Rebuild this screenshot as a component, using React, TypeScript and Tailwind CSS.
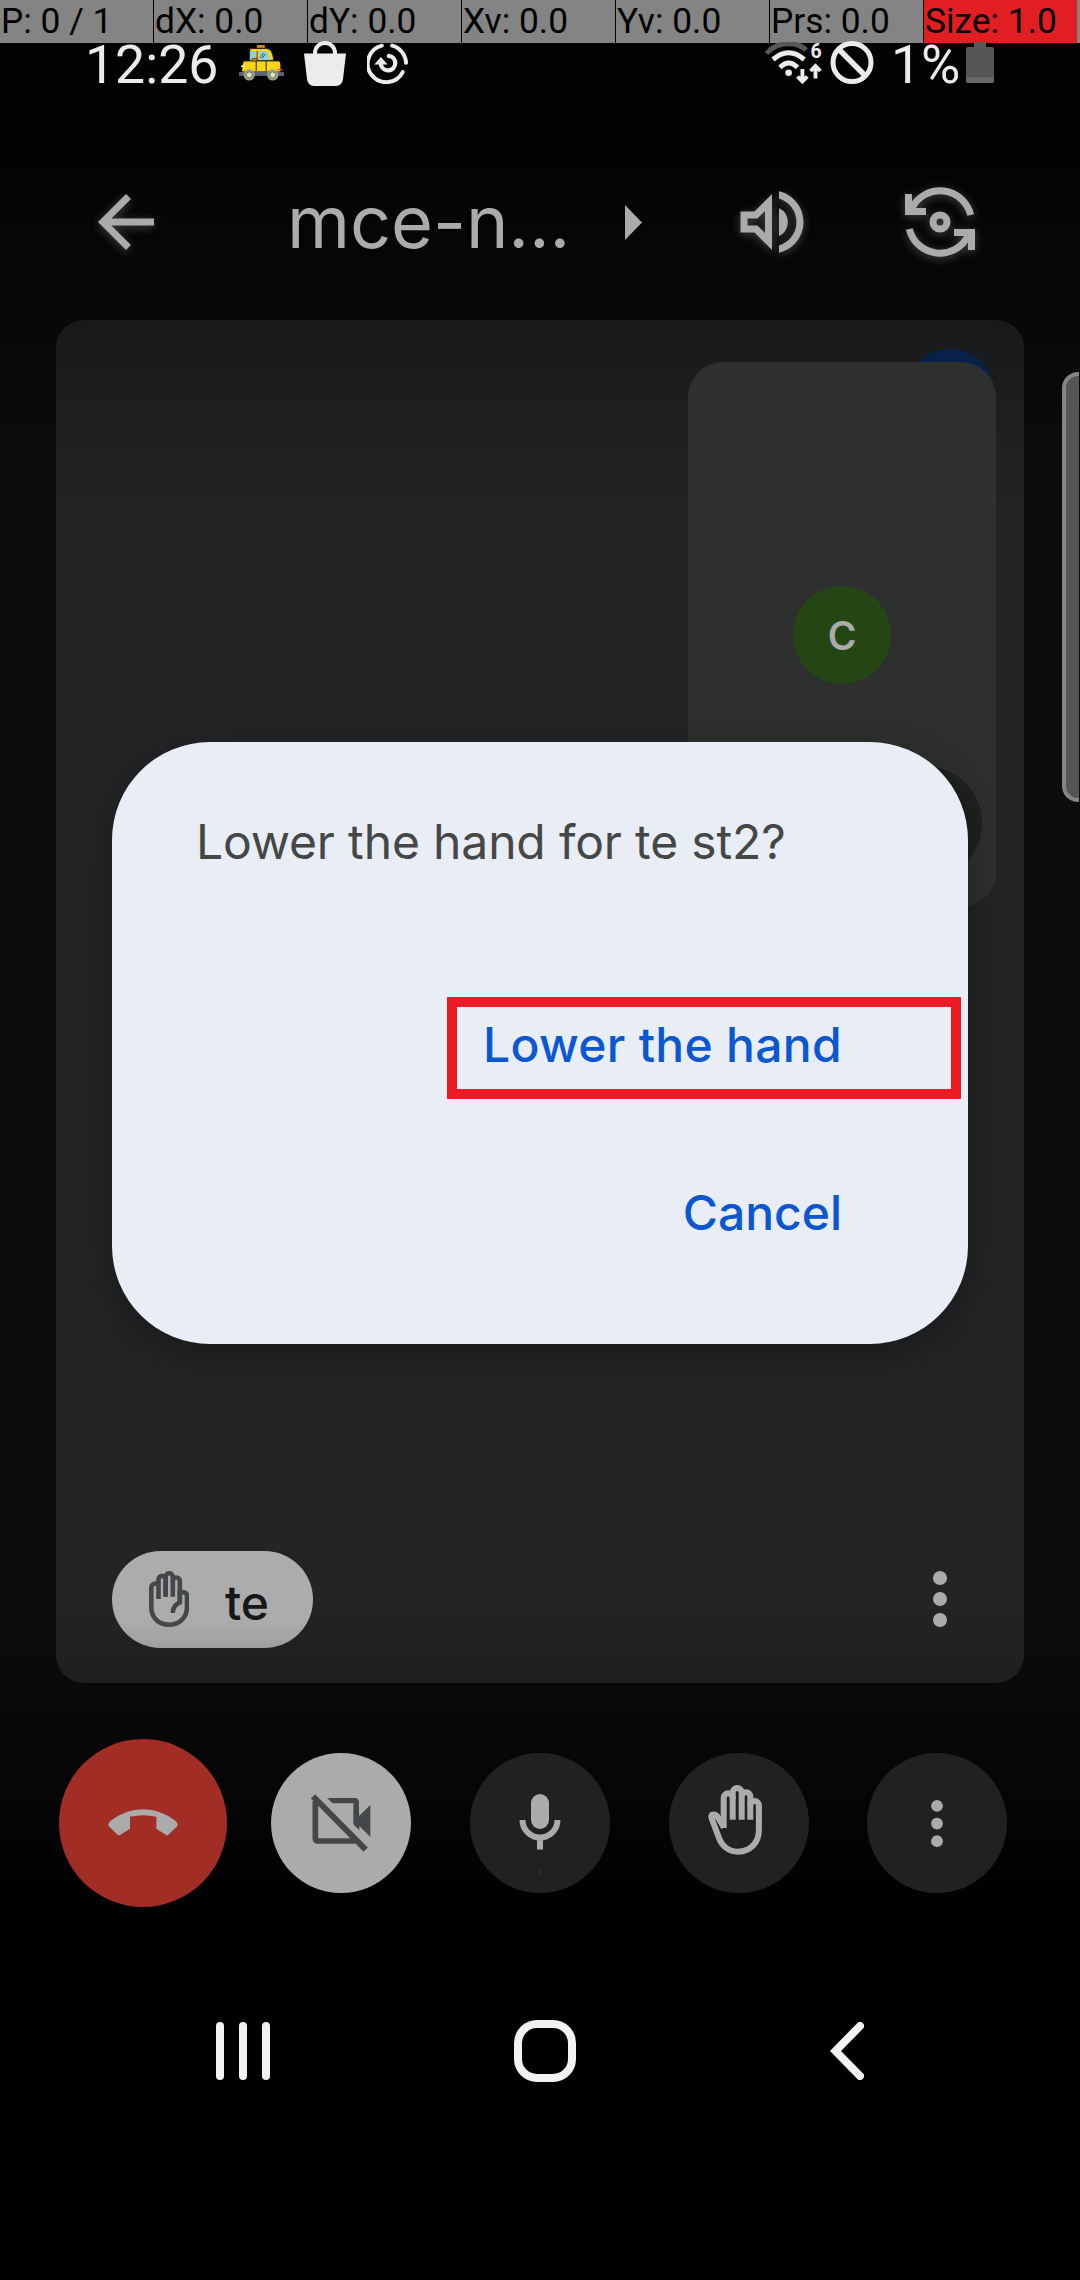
import React from "react";

const metrics = ["P: 0 / 1", "dX: 0.0", "dY: 0.0", "Xv: 0.0", "Yv: 0.0", "Prs: 0.0"];

function PointerBar() {
  return (
    <div className="flex h-[43px] gap-px bg-black font-[Roboto] text-[35.3px] leading-[43px] text-black">
      {metrics.map((m) => (
        <div key={m} className="w-[153px] shrink-0 whitespace-nowrap bg-[#848484] pl-[1px]">
          {m}
        </div>
      ))}
      <div className="w-[153px] shrink-0 whitespace-nowrap bg-[#e11f22] pl-[1px]">Size: 1.0</div>
      <div className="-ml-px grow bg-[#848484]" />
    </div>
  );
}

function Taxi() {
  return (
    <svg viewBox="0 0 136 108" className="ml-[19px] mt-[5px] h-[36px] w-[45px] shrink-0">
      <rect x="54" y="0" width="24" height="8" fill="#e8921c" />
      <path d="M33 10H84Q102 12 105 46H33Z" fill="#fbd414" stroke="#2a2408" strokeWidth="3" />
      <path d="M33 18H51V46H33Z" fill="#8fd0e0" />
      <path d="M60 18H80Q92 26 94 46H60Z" fill="#8fd0e0" />
      <path d="M64 38L74 24M70 40L80 26" stroke="#24323a" strokeWidth="2.5" />
      <path d="M55 17V46" stroke="#b56a18" strokeWidth="5" />
      <rect x="0" y="81" width="136" height="12" fill="#5c6670" />
      <path d="M15 48H118Q125 50 125 60V80H10V62Z" fill="#fbd414" />
      <path d="M15 48H118" stroke="#2a2408" strokeWidth="2.5" />
      <path d="M52 46V78M82 46V78" stroke="#2a2408" strokeWidth="3" />
      <path d="M38 46Q38 38 48 40H55V48H40Z" fill="#c98b12" stroke="#2a2408" strokeWidth="2" />
      <path d="M6 64H20" stroke="#fff5b0" strokeWidth="4" />
      <path d="M117 74H132" stroke="#e0436a" strokeWidth="4" />
      <circle cx="31" cy="90" r="17" fill="#9a9f94" />
      <circle cx="31" cy="90" r="9" fill="#e6e2b8" stroke="#4a4a40" strokeWidth="2" />
      <circle cx="102" cy="90" r="17" fill="#9a9f94" />
      <circle cx="102" cy="90" r="9" fill="#e6e2b8" stroke="#4a4a40" strokeWidth="2" />
    </svg>
  );
}

function StatusBar() {
  return (
    <div className="relative -mt-[3px] flex h-[48px] items-start pl-[85px] font-[Roboto] text-[53.6px] leading-[50px] text-[#ececec]">
      <span className="w-[135px] shrink-0 whitespace-nowrap">12:26</span>
      <Taxi />
      <svg viewBox="0 0 42 45" className="ml-[20px] mt-[1px] h-[45px] w-[42px] shrink-0">
        <path d="M11 14V12a10 10 0 0 1 20 0v2" fill="none" stroke="#ececec" strokeWidth="4" />
        <path d="M0 12.500H42L39 38Q38 45 32 45H10Q4 45 3 38Z" fill="#ececec" />
      </svg>
      <svg viewBox="0 0 124 124" className="ml-[21px] mt-[3px] h-[41px] w-[41px] shrink-0" fill="none" stroke="#ececec" strokeWidth="12" strokeLinecap="round">
        <path d="M45 8A56 56 0 1 0 108 88" />
        <path d="M76 8A56 56 0 0 1 118 60" />
        <path d="M66 39A22 22 0 1 1 42 66" strokeWidth="13" />
        <path d="M33 60L42 50L51 60Z" strokeWidth="10" fill="#ececec" />
      </svg>
      <svg viewBox="0 0 60 44" className="ml-[356px] mt-[2px] h-[44px] w-[60px] shrink-0" fill="none" stroke="#ececec" strokeWidth="5">
        <path d="M2.500 11.500C8 5 16 1.700 24.600 1.700C32 1.700 38 4 42 8" stroke="#585858" />
        <path d="M9 17.500Q24.600 4 40.300 17.500" />
        <path d="M16 25.500Q24.600 16.500 33.500 25.500" />
        <circle cx="24.600" cy="30.700" r="3.300" fill="#ececec" stroke="none" />
        <path d="M38.400 27V39M33.500 34.500L38.400 39.500L43.300 34.500M51.500 36.500V25M46.600 29L51.500 24L56.400 29" strokeWidth="3.900" />
        <text x="46.500" y="16" fill="#ececec" stroke="none" fontFamily="Roboto" fontWeight="700" fontSize="19.500">6</text>
      </svg>
      <svg viewBox="0 0 44 44" className="ml-[6px] mt-px h-[44px] w-[44px] shrink-0" fill="none" stroke="#ececec" strokeWidth="5">
        <circle cx="22" cy="21.500" r="19" />
        <path d="M8.500 8L35.500 35" strokeWidth="5.500" />
      </svg>
      <span className="ml-[17px] w-[70px] shrink-0 whitespace-nowrap">1%</span>
      <svg viewBox="0 0 28 41" className="ml-[5px] mt-[2px] h-[41px] w-[28px] shrink-0">
        <path d="M8 0h12v6h-12z" fill="#585858" />
        <rect y="5" width="28" height="36" rx="2" fill="#555555" />
        <path d="M0 35h28v4q0 2-2 2h-24q-2 0-2-2z" fill="#666666" />
      </svg>
    </div>
  );
}

const glow = "[filter:drop-shadow(0_2px_5px_rgba(150,160,170,0.4))]";

function Header() {
  return (
    <div className="mt-[92px] flex h-[84px] items-center pl-[84px] text-[#ababab]">
      <svg viewBox="0 0 24 24" className={"h-[84px] w-[84px] shrink-0 " + glow} fill="currentColor">
        <path d="M20 11H7.830l5.590-5.590L12 4l-8 8 8 8 1.410-1.410L7.830 13H20v-2z" />
      </svg>
      <div className="ml-[119px] w-[300px] whitespace-nowrap font-[Inter] text-[72px] leading-[84px] tracking-[-0.1px]">mce-n...</div>
      <svg viewBox="0 0 17 35" className="ml-[38px] h-[35px] w-[17px] shrink-0" fill="currentColor">
        <path d="M0 0L17 17.500L0 35Z" />
      </svg>
      <svg viewBox="0 0 24 24" className={"ml-[87.500px] h-[84px] w-[84px] shrink-0 " + glow} fill="currentColor">
        <path d="M3 9v6h4l5 5V4L7 9H3zm7-.170v6.340L7.830 13H5v-2h2.830L10 8.830z" />
        <path d="M16.500 12A4.500 4.500 0 0 0 14 7.970v8.050c1.480-.730 2.500-2.250 2.500-4.020z" />
        <path d="M14 3.230v2.060c2.890.860 5 3.540 5 6.710s-2.110 5.850-5 6.710v2.060c4.010-.910 7-4.490 7-8.770s-2.990-7.860-7-8.770z" />
      </svg>
      <svg viewBox="0 0 24 24" className={"ml-[84.500px] h-[84px] w-[84px] shrink-0 " + glow} fill="none" stroke="currentColor" strokeWidth="2">
        <circle cx="12" cy="12" r="2" />
        <path d="M20.770 10A9 9 0 0 0 4 8M3 4V9H8" />
        <path d="M3.230 14A9 9 0 0 0 20 16M21 20V15H16" />
      </svg>
    </div>
  );
}

function SelfView() {
  return (
    <div className="relative ml-auto mr-[28px] mt-[42px] h-[545px] w-[308px]">
      <div className="absolute left-[219px] top-[-13px] h-[87px] w-[87px] rounded-full bg-[#08204a]" />
      <div className="relative flex h-full flex-col items-center rounded-[35px] bg-[#2e302f] pt-[224px]">
        <div className="h-[98px] w-[98px] rounded-full bg-[#244615] text-center font-[Inter] text-[39px] font-semibold leading-[99px] text-[#ababab]">C</div>
        <div className="absolute bottom-[27px] right-[14px] h-[114px] w-[114px] rounded-full bg-[#1f2120]" />
      </div>
    </div>
  );
}

function Dots({ className }: { className: string }) {
  return (
    <svg viewBox="0 0 14 56" className={className} fill="#ababab">
      <circle cx="7" cy="7" r="7" />
      <circle cx="7" cy="28" r="7" />
      <circle cx="7" cy="49" r="7" />
    </svg>
  );
}

function VideoTile() {
  return (
    <div className="mx-[56px] mt-[56px] flex h-[1363px] flex-col rounded-[28px] bg-[linear-gradient(to_bottom,#18191a_0px,#232426_200px,#232426_1280px,#1d1e1f_1363px)]">
      <SelfView />
      <div className="mb-[35px] mt-auto flex items-center justify-between pl-[56px] pr-[77px]">
        <div className="flex h-[97px] w-[201px] items-center rounded-full bg-[linear-gradient(to_bottom,#acacac_0,#acacac_70%,#9f9f9f_100%)] pl-[37px]">
          <svg viewBox="0 0 40 56" className="mb-px h-[56px] w-[40px] shrink-0" fill="none" stroke="#44474a" strokeWidth="4.600">
            <path d="M9.500 28V8.500a3.600 3.600 0 0 1 7.200 0V25.700" />
            <path d="M16.700 25.700V5.800a3.550 3.550 0 0 1 7.100 0V25.700" />
            <path d="M23.800 10a3.500 3.500 0 0 1 7 0V31.500Q23.800 34.500 23.800 42" />
            <path d="M9.500 13.500C6 11.500 2.300 13 2.300 17V36C2.300 46 9 53.700 20 53.700S38 46 38 36V25C38 21.500 35 20.500 30.800 21.500V32" />
          </svg>
          <span className="ml-[36px] pt-[6px] font-[Inter] text-[48px] font-medium leading-[60px] text-[#161719]">te</span>
        </div>
        <Dots className="mb-px h-[56px] w-[14px]" />
      </div>
    </div>
  );
}

function Controls() {
  return (
    <div className="mt-[56px] flex h-[168px] items-center pl-[59px]">
      <div className="flex h-[168px] w-[168px] items-center justify-center rounded-full bg-[#a12d25]">
        <svg viewBox="0 0 210 80" className="mb-[2px] h-[27px] w-[70px]" fill="#ababab">
          <path d="M8 35Q52 0 105 0T202 35Q214 45 206 53L181 77Q177 80 173 77L145 59V23Q105 13 66 23V59L37 77Q33 80 29 77L4 53Q-4 45 8 35Z" />
        </svg>
      </div>
      <div className="ml-[44px] flex h-[140px] w-[140px] items-center justify-center rounded-full bg-[#ababab]">
        <svg viewBox="812 828 180 174" className="h-[58px] w-[60px]">
          <path d="M818 835L976 995" stroke="#44474a" strokeWidth="18" fill="none" />
          <path d="M825 850V960Q825 969 834 969H945" stroke="#44474a" strokeWidth="17" fill="none" />
          <path d="M860 840H942Q956 840 956 854V894L990 861V957L957 924V937L939 919V856H877Z" fill="#44474a" />
        </svg>
      </div>
      <div className="ml-[59px] flex h-[140px] w-[140px] flex-col items-center rounded-full bg-[#212123] pt-[41px]">
        <svg viewBox="0 0 42 56" className="h-[56px] w-[42px]" fill="none" stroke="#ababab" strokeWidth="6">
          <rect x="12" y="0" width="18" height="35" rx="9" fill="#ababab" stroke="none" />
          <path d="M3.500 26a17.500 17.500 0 0 0 35 0M21 43V55.500" />
        </svg>
        <div className="mt-[21px] h-[2px] w-px bg-[#ff0000]" />
      </div>
      <div className="ml-[59px] flex h-[140px] w-[140px] justify-center rounded-full bg-[#212123] pr-[8px] pt-[31px]">
        <svg viewBox="0 0 56 72" className="h-[72px] w-[56px]" fill="none" stroke="#ababab" strokeWidth="6">
          <path d="M25.700 35.700V13.800a4.500 4.500 0 0 0-9 0V44" />
          <path d="M25.700 15V8.500a4.500 4.500 0 0 1 9 0V35.700" />
          <path d="M34.700 12.500a4.300 4.300 0 0 1 8.600 0V35.700" />
          <path d="M43.300 21.400a4.300 4.300 0 0 1 8.600 0V46C51.900 59 43 67.700 31 67.700C21 67.700 14.500 61 12 54L4.500 34C3 29 9 30 11 33.500L17 43.500" />
        </svg>
      </div>
      <div className="ml-[58px] flex h-[140px] w-[140px] items-center justify-center rounded-full bg-[#212123]">
        <Dots className="h-[47px] w-[12px]" />
      </div>
    </div>
  );
}

function SystemNav() {
  return (
    <div className="mt-[113px] flex h-[62px] items-center pl-[216px]">
      <div className="flex h-[58px] w-[54px] justify-between">
        <div className="w-[8px] rounded-full bg-[#f2f2f2]" />
        <div className="w-[8px] rounded-full bg-[#f2f2f2]" />
        <div className="w-[8px] rounded-full bg-[#f2f2f2]" />
      </div>
      <div className="ml-[244px] h-[62px] w-[62px] rounded-[23px] border-8 border-[#f2f2f2]" />
      <svg viewBox="0 0 34 58" className="ml-[254px] h-[58px] w-[34px]" fill="none" stroke="#f2f2f2" strokeWidth="8" strokeLinecap="round">
        <path d="M30 4L5.500 29L30 54" />
      </svg>
    </div>
  );
}

function LowerHandDialog() {
  return (
    <div className="absolute left-[112px] top-[742px] flex h-[602px] w-[856px] flex-col rounded-[98px] bg-[#e8edf6] pt-[68px] font-[Inter] text-[48px] leading-[64px] shadow-[0_10px_36px_rgba(0,0,0,0.3)]">
      <div className="whitespace-nowrap pl-[84px] tracking-[-0.15px] text-[#444746]">Lower the hand for te st2?</div>
      <button className="mr-[126px] mt-[139px] self-end whitespace-nowrap font-medium tracking-[0.3px] text-[#0b57d0]">Lower the hand</button>
      <button className="mr-[126px] mt-[104px] self-end whitespace-nowrap font-medium text-[#0b57d0]">Cancel</button>
      <div className="pointer-events-none absolute left-[335px] top-[255px] h-[102px] w-[514px] border-[10px] border-[#ed1c24]" />
    </div>
  );
}

export default function App() {
  return (
    <div className="relative h-[2280px] w-[1080px] overflow-hidden bg-[linear-gradient(to_bottom,#020202_0px,#030303_160px,#080808_320px,#0c0c0c_500px,#0c0c0c_1600px,#090909_1700px,#000000_1920px)]">
      <PointerBar />
      <StatusBar />
      <Header />
      <VideoTile />
      <Controls />
      <SystemNav />
      <div className="absolute right-px top-[372px] h-[430px] w-[17px] rounded-l-[16px] border-4 border-r-0 border-[#858585] bg-[#555555]" />
      <LowerHandDialog />
    </div>
  );
}
